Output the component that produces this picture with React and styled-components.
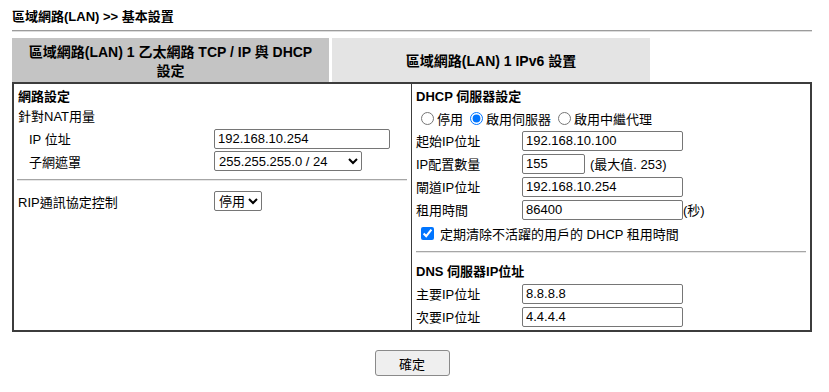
import React from "react";
import styled, { createGlobalStyle } from "styled-components";

const GlobalStyle = createGlobalStyle`
  html, body { margin: 0; padding: 0; background: #fff; }
  body {
    font-family: "Liberation Sans", "Noto Sans CJK TC", sans-serif;
    font-size: 13px;
    color: #000;
  }
  * { box-sizing: border-box; }
`;

const Page = styled.div`
  width: 800px;
  margin-left: 12px;
`;

const Title = styled.div`
  font-weight: bold;
  line-height: 16px;
  padding-top: 9px;
`;

const TopRule = styled.div`
  margin-top: 5px;
  height: 2px;
  border-top: 1px solid #9c9c9c;
  border-bottom: 1px solid #dcdcdc;
`;

const Tabs = styled.div`
  display: flex;
  gap: 3px;
  margin-top: 6px;
`;

const Tab = styled.div`
  width: ${(p) => p.$w}px;
  height: 44px;
  padding-top: 3px;
  background: ${(p) => (p.$active ? "#c4c4c4" : "#e4e4e4")};
  font-weight: bold;
  font-size: 14px;
  line-height: 19px;
  display: flex;
  align-items: center;
  justify-content: center;
  text-align: center;
`;

const Panel = styled.div`
  display: grid;
  grid-template-columns: 398px 1fr;
  border: 2px solid #3c3c3c;
`;

const Cell = styled.div`
  padding: 3px 4px 2px 4px;
  border-right: ${(p) => (p.$divider ? "1px solid #3c3c3c" : "none")};
  display: flex;
  flex-direction: column;
`;

const SectionTitle = styled.div`
  font-weight: bold;
  line-height: 20px;
`;

const Line = styled.div`
  line-height: 20px;
`;

const FieldRow = styled.div`
  display: grid;
  grid-template-columns: ${(p) => p.$label}px auto;
  align-items: center;
  height: ${(p) => p.$h || 23}px;
`;

const Label = styled.span`
  padding-left: ${(p) => p.$indent || 0}px;
  white-space: nowrap;
`;

const Control = styled.div`
  display: flex;
  align-items: center;
  white-space: nowrap;
`;

const TextInput = styled.input`
  width: ${(p) => p.$w}px;
  height: 20px;
  border: 1px solid #767676;
  border-radius: 2px;
  padding: 1px 3px;
  font-family: "Liberation Sans", "Noto Sans CJK TC", sans-serif;
  font-size: 13px;
  color: #000;
  background: #fff;
  outline: none;
`;

const Select = styled.select`
  width: ${(p) => p.$w}px;
  height: 20px;
  font-family: "Liberation Sans", "Noto Sans CJK TC", sans-serif;
  font-size: 13px;
  color: #000;
  border: 1px solid #767676;
  border-radius: 2px;
  background: #fff;
`;

const Suffix = styled.span`
  margin-left: ${(p) => p.$gap || 0}px;
`;

const Rule = styled.div`
  height: 2px;
  border-top: 1px solid #a6a6a6;
  border-bottom: 1px solid #e6e6e6;
  margin: ${(p) => p.$m};
`;

const RadioRow = styled.div`
  display: flex;
  align-items: center;
  height: 22px;
`;

const RadioLabel = styled.label`
  display: inline-flex;
  align-items: center;
  margin-right: 2px;
  input {
    margin: 0 3px 0 5px;
    width: 13px;
    height: 13px;
  }
`;

const CheckRow = styled.label`
  display: flex;
  align-items: center;
  height: 24px;
  input {
    margin: 0 6px 0 5px;
    width: 13px;
    height: 13px;
  }
`;

const ButtonBar = styled.div`
  display: flex;
  justify-content: center;
  padding-top: 18px;
`;

const Button = styled.button`
  width: 75px;
  height: 26px;
  font-family: "Noto Sans CJK TC", "Liberation Sans", sans-serif;
  font-size: 13px;
  color: #000;
  background: #efefef;
  border: 1px solid #8a8a8a;
  border-radius: 3px;
  padding: 0;
`;

export default function App() {
  return (
    <>
      <GlobalStyle />
      <Page>
        <Title>區域網路(LAN) &gt;&gt; 基本設置</Title>
        <TopRule />
        <Tabs>
          <Tab $w={317} $active>
            <span>
              區域網路(LAN) 1 乙太網路 TCP / IP 與 DHCP
              <br />
              設定
            </span>
          </Tab>
          <Tab $w={318}>區域網路(LAN) 1 IPv6 設置</Tab>
        </Tabs>
        <Panel>
          <Cell $divider>
            <SectionTitle>網路設定</SectionTitle>
            <Line>針對NAT用量</Line>
            <FieldRow $label={196}>
              <Label $indent={11}>IP 位址</Label>
              <Control>
                <TextInput $w={176} defaultValue="192.168.10.254" />
              </Control>
            </FieldRow>
            <FieldRow $label={196} $h={22}>
              <Label $indent={11}>子網遮罩</Label>
              <Control>
                <Select $w={148} defaultValue="24">
                  <option value="24">255.255.255.0 / 24</option>
                </Select>
              </Control>
            </FieldRow>
            <Rule $m="7px 0 9px -1px" />
            <FieldRow $label={196} $h={22}>
              <Label>RIP通訊協定控制</Label>
              <Control>
                <Select $w={48} defaultValue="off">
                  <option value="off">停用</option>
                </Select>
              </Control>
            </FieldRow>
          </Cell>
          <Cell>
            <SectionTitle>DHCP 伺服器設定</SectionTitle>
            <RadioRow>
              <RadioLabel>
                <input type="radio" name="dhcp" />
                停用
              </RadioLabel>
              <RadioLabel>
                <input type="radio" name="dhcp" defaultChecked />
                啟用伺服器
              </RadioLabel>
              <RadioLabel>
                <input type="radio" name="dhcp" />
                啟用中繼代理
              </RadioLabel>
            </RadioRow>
            <FieldRow $label={106}>
              <Label>起始IP位址</Label>
              <Control>
                <TextInput $w={161} defaultValue="192.168.10.100" />
              </Control>
            </FieldRow>
            <FieldRow $label={106}>
              <Label>IP配置數量</Label>
              <Control>
                <TextInput $w={63} defaultValue="155" />
                <Suffix $gap={5}>(最大值. 253)</Suffix>
              </Control>
            </FieldRow>
            <FieldRow $label={106}>
              <Label>閘道IP位址</Label>
              <Control>
                <TextInput $w={161} defaultValue="192.168.10.254" />
              </Control>
            </FieldRow>
            <FieldRow $label={106}>
              <Label>租用時間</Label>
              <Control>
                <TextInput $w={161} defaultValue="86400" />
                <Suffix>(秒)</Suffix>
              </Control>
            </FieldRow>
            <CheckRow>
              <input type="checkbox" defaultChecked />
              定期清除不活躍的用戶的 DHCP 租用時間
            </CheckRow>
            <Rule $m="6px 0 9px 0" />
            <SectionTitle>DNS 伺服器IP位址</SectionTitle>
            <FieldRow $label={106}>
              <Label>主要IP位址</Label>
              <Control>
                <TextInput $w={161} defaultValue="8.8.8.8" />
              </Control>
            </FieldRow>
            <FieldRow $label={106}>
              <Label>次要IP位址</Label>
              <Control>
                <TextInput $w={161} defaultValue="4.4.4.4" />
              </Control>
            </FieldRow>
          </Cell>
        </Panel>
        <ButtonBar>
          <Button>確定</Button>
        </ButtonBar>
      </Page>
    </>
  );
}
